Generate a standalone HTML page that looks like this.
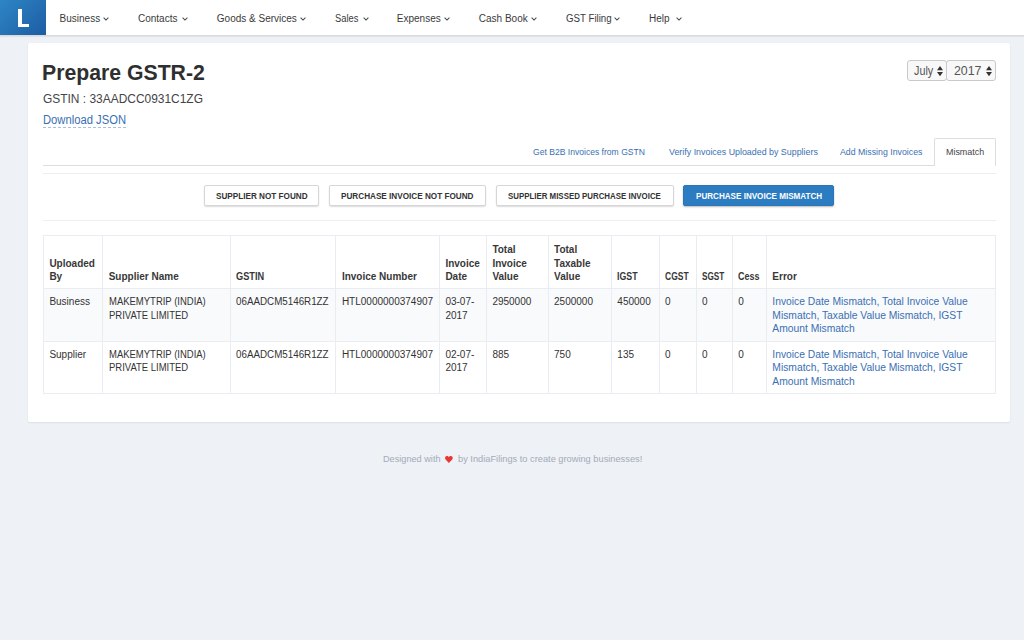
<!DOCTYPE html>
<html><head><meta charset="utf-8">
<style>
*{box-sizing:border-box;margin:0;padding:0}
html,body{width:1024px;height:640px;overflow:hidden}
body{background:#eef1f5;font-family:"Liberation Sans",sans-serif;color:#333;position:relative}
.a{position:absolute;white-space:nowrap;line-height:1}
#nav{position:absolute;left:0;top:0;width:1024px;height:35px;background:#fff;box-shadow:0 1px 0 #d9dadd,0 2px 1px rgba(0,0,0,.06)}
#logo{position:absolute;left:0;top:0;width:46px;height:35px;background:linear-gradient(135deg,#2d86c5 0%,#1d5ca3 100%)}
#logo span{position:absolute;left:16.3px;top:4.6px;font-size:26.8px;font-weight:bold;color:#fff;line-height:1;transform:scaleX(0.82);transform-origin:0 0}
.ni{position:absolute;top:13.7px;font-size:10px;color:#3a3a3a;line-height:1;white-space:nowrap}
.chev{position:absolute;top:16.6px;width:6px;height:4px}
#card{position:absolute;left:28px;top:42.5px;width:982px;height:379.8px;background:#fff;border-radius:2px;box-shadow:0 1px 2px rgba(0,0,0,.08)}
.sel{position:absolute;top:60px;height:20.5px;border:1px solid #c9c9c9;border-radius:3px;background:#f8f8f8;font-size:12px;color:#555}
.sel span{position:absolute;top:4px;line-height:1}
.sel svg{position:absolute;top:4.5px}
.tab{position:absolute;top:147px;font-size:9.8px;color:#3a70b3;line-height:1;white-space:nowrap;transform:scaleX(0.875);transform-origin:0 0}
.line{position:absolute;left:43px;width:952.6px;height:1px}
.btn{position:absolute;top:185.3px;height:20.7px;border:1px solid #d6d6d6;border-radius:2px;background:#fff;box-shadow:0 1px 1.5px rgba(0,0,0,.14);font-size:9.3px;font-weight:bold;color:#333;line-height:1;white-space:nowrap}
.btn span{position:absolute;top:5.3px;transform:scaleX(0.878);transform-origin:0 0}
table{position:absolute;left:43px;top:235.3px;border-collapse:collapse;font-size:10px;color:#333}
td,th{border:1px solid #e9ecf1;vertical-align:top;text-align:left;padding:6px 0 0 5.4px;line-height:13.4px}
th{font-weight:bold;color:#383838;vertical-align:bottom;padding:0 0 4.3px 5.4px;line-height:13.6px}
.c{display:inline-block;transform:scaleX(0.948);transform-origin:0 0}
.g{display:inline-block;transform:scaleX(0.98);transform-origin:0 0}
.s{display:inline-block;transform-origin:0 100%}
.err{color:#3a70b3;font-size:10.3px}
</style></head><body>
<div id="nav">
  <div id="logo"><i style="position:absolute;left:18px;top:8.5px;width:4.4px;height:18.6px;background:#fff"></i><i style="position:absolute;left:18px;top:23.9px;width:11.1px;height:3.2px;background:#fff"></i></div>
  <div class="ni" style="left:59.6px">Business</div>
  <div class="ni" style="left:138px">Contacts</div>
  <div class="ni" style="left:216.8px">Goods &amp; Services</div>
  <div class="ni" style="left:334.8px;transform:scaleX(0.935);transform-origin:0 0">Sales</div>
  <div class="ni" style="left:396.8px">Expenses</div>
  <div class="ni" style="left:478.8px">Cash Book</div>
  <div class="ni" style="left:565.6px;transform:scaleX(0.97);transform-origin:0 0">GST Filing</div>
  <div class="ni" style="left:649px">Help</div>
  <svg class="chev" style="left:103.3px" viewBox="0 0 6 4"><path d="M0.6 0.6 L3 3 L5.4 0.6" fill="none" stroke="#4a4a4a" stroke-width="1.05"/></svg>
  <svg class="chev" style="left:182px" viewBox="0 0 6 4"><path d="M0.6 0.6 L3 3 L5.4 0.6" fill="none" stroke="#4a4a4a" stroke-width="1.05"/></svg>
  <svg class="chev" style="left:300px" viewBox="0 0 6 4"><path d="M0.6 0.6 L3 3 L5.4 0.6" fill="none" stroke="#4a4a4a" stroke-width="1.05"/></svg>
  <svg class="chev" style="left:362.5px" viewBox="0 0 6 4"><path d="M0.6 0.6 L3 3 L5.4 0.6" fill="none" stroke="#4a4a4a" stroke-width="1.05"/></svg>
  <svg class="chev" style="left:444px" viewBox="0 0 6 4"><path d="M0.6 0.6 L3 3 L5.4 0.6" fill="none" stroke="#4a4a4a" stroke-width="1.05"/></svg>
  <svg class="chev" style="left:530.5px" viewBox="0 0 6 4"><path d="M0.6 0.6 L3 3 L5.4 0.6" fill="none" stroke="#4a4a4a" stroke-width="1.05"/></svg>
  <svg class="chev" style="left:614px" viewBox="0 0 6 4"><path d="M0.6 0.6 L3 3 L5.4 0.6" fill="none" stroke="#4a4a4a" stroke-width="1.05"/></svg>
  <svg class="chev" style="left:675.5px" viewBox="0 0 6 4"><path d="M0.6 0.6 L3 3 L5.4 0.6" fill="none" stroke="#4a4a4a" stroke-width="1.05"/></svg>
</div>
<div id="card"></div>

<div class="a" style="left:42.3px;top:61.8px;font-size:22px;font-weight:bold;color:#2f2f2f;transform:scaleX(0.965);transform-origin:0 0">Prepare GSTR-2</div>
<div class="a" style="left:43px;top:91.5px;font-size:13.3px;color:#444;transform:scaleX(0.898);transform-origin:0 0">GSTIN : 33AADCC0931C1ZG</div>
<div class="a" style="left:43px;top:114.4px;font-size:12.3px;color:#3a70b3;transform:scaleX(0.913);transform-origin:0 0">Download JSON</div>
<div class="a" style="left:43px;top:127px;width:83px;height:0;border-top:1px dashed #a9c0dc"></div>

<div class="sel" style="left:907.2px;width:39.6px"><span style="left:5.6px;transform:scaleX(0.9);transform-origin:0 0">July</span><svg style="left:29px" width="6" height="11" viewBox="0 0 6 11"><path d="M0 4.2 L3 0 L6 4.2Z M0 6 L3 10.2 L6 6Z" fill="#333"/></svg></div>
<div class="sel" style="left:946.4px;width:49.4px"><span style="left:6.3px;transform:scaleX(1.03);transform-origin:0 0">2017</span><svg style="left:38.5px" width="6" height="11" viewBox="0 0 6 11"><path d="M0 4.2 L3 0 L6 4.2Z M0 6 L3 10.2 L6 6Z" fill="#333"/></svg></div>

<div class="line" style="top:165px;background:#dddddd"></div>
<div class="a" style="left:933.7px;top:138.3px;width:62px;height:28px;background:#fff;border:1px solid #dddddd;border-bottom:none;border-radius:2px 2px 0 0"></div>
<div class="tab" style="left:533.2px">Get B2B Invoices from GSTN</div>
<div class="tab" style="left:668.5px;transform:scaleX(0.905)">Verify Invoices Uploaded by Suppliers</div>
<div class="tab" style="left:840px;transform:scaleX(0.896)">Add Missing Invoices</div>
<div class="tab" style="left:945.6px;color:#444;transform:scaleX(0.91)">Mismatch</div>
<div class="line" style="top:173px;background:#eeeeee"></div>

<div class="btn" style="left:204.4px;width:114.2px"><span style="left:10.5px">SUPPLIER NOT FOUND</span></div>
<div class="btn" style="left:329.2px;width:156.5px"><span style="left:11px">PURCHASE INVOICE NOT FOUND</span></div>
<div class="btn" style="left:495.5px;width:178.2px"><span style="left:11.5px;transform:scaleX(0.848)">SUPPLIER MISSED PURCHASE INVOICE</span></div>
<div class="btn" style="left:683.4px;width:150.6px;background:#2b7cc1;border-color:#2a76b9;color:#fff;box-shadow:0 1px 2px rgba(0,0,0,.28)"><span style="left:11.5px;transform:scaleX(0.87)">PURCHASE INVOICE MISMATCH</span></div>
<div class="line" style="top:220px;background:#eeeeee"></div>

<table>
<colgroup><col style="width:59.3px"><col style="width:127.7px"><col style="width:105.5px"><col style="width:103.5px"><col style="width:47px"><col style="width:61.7px"><col style="width:63.3px"><col style="width:47.6px"><col style="width:37.1px"><col style="width:36.3px"><col style="width:34px"><col style="width:229.3px"></colgroup>
<tr style="height:53px"><th>Uploaded<br>By</th><th>Supplier Name</th><th><span class="s" style="transform:scaleX(0.92)">GSTIN</span></th><th>Invoice Number</th><th>Invoice<br>Date</th><th>Total<br>Invoice<br>Value</th><th>Total<br>Taxable<br>Value</th><th><span class="s" style="transform:scaleX(0.88)">IGST</span></th><th><span class="s" style="transform:scaleX(0.85)">CGST</span></th><th><span class="s" style="transform:scaleX(0.82)">SGST</span></th><th><span class="s" style="transform:scaleX(0.9)">Cess</span></th><th>Error</th></tr>
<tr style="height:52.5px;background:#f9fafc"><td>Business</td><td><span class="c">MAKEMYTRIP (INDIA)<br>PRIVATE LIMITED</span></td><td><span class="g">06AADCM5146R1ZZ</span></td><td>HTL0000000374907</td><td>03-07-<br>2017</td><td>2950000</td><td>2500000</td><td>450000</td><td>0</td><td>0</td><td>0</td><td class="err">Invoice Date Mismatch, Total Invoice Value<br>Mismatch, Taxable Value Mismatch, IGST<br>Amount Mismatch</td></tr>
<tr style="height:52.5px"><td>Supplier</td><td><span class="c">MAKEMYTRIP (INDIA)<br>PRIVATE LIMITED</span></td><td><span class="g">06AADCM5146R1ZZ</span></td><td>HTL0000000374907</td><td>02-07-<br>2017</td><td>885</td><td>750</td><td>135</td><td>0</td><td>0</td><td>0</td><td class="err">Invoice Date Mismatch, Total Invoice Value<br>Mismatch, Taxable Value Mismatch, IGST<br>Amount Mismatch</td></tr>
</table>

<div class="a" style="left:383.3px;top:454.3px;font-size:9.8px;color:#a3abb9;transform:scaleX(0.935);transform-origin:0 0">Designed with</div>
<svg class="a" style="left:445.2px;top:456px" width="7.8" height="7" viewBox="0 0 8 7" preserveAspectRatio="none"><path d="M4 7 L0.6 3.4 C-0.6 2 0.3 0 2 0 C3 0 3.6 0.6 4 1.2 C4.4 0.6 5 0 6 0 C7.7 0 8.6 2 7.4 3.4Z" fill="#e53935"/></svg>
<div class="a" style="left:457.8px;top:454.3px;font-size:9.8px;color:#a3abb9;transform:scaleX(0.945);transform-origin:0 0">by IndiaFilings to create growing businesses!</div>
</body></html>
